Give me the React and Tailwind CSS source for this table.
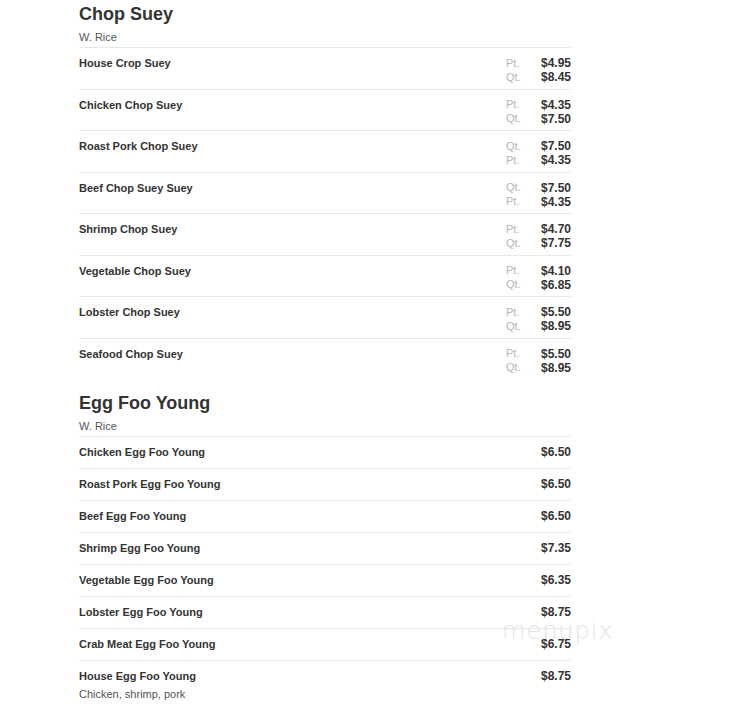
import React from 'react';

const chopSuey = [
  { name: 'House Crop Suey', prices: [['Pt.', '$4.95'], ['Qt.', '$8.45']] },
  { name: 'Chicken Chop Suey', prices: [['Pt.', '$4.35'], ['Qt.', '$7.50']] },
  { name: 'Roast Pork Chop Suey', prices: [['Qt.', '$7.50'], ['Pt.', '$4.35']] },
  { name: 'Beef Chop Suey Suey', prices: [['Qt.', '$7.50'], ['Pt.', '$4.35']] },
  { name: 'Shrimp Chop Suey', prices: [['Pt.', '$4.70'], ['Qt.', '$7.75']] },
  { name: 'Vegetable Chop Suey', prices: [['Pt.', '$4.10'], ['Qt.', '$6.85']] },
  { name: 'Lobster Chop Suey', prices: [['Pt.', '$5.50'], ['Qt.', '$8.95']] },
  { name: 'Seafood Chop Suey', prices: [['Pt.', '$5.50'], ['Qt.', '$8.95']] },
];

const eggFooYoung = [
  { name: 'Chicken Egg Foo Young', price: '$6.50' },
  { name: 'Roast Pork Egg Foo Young', price: '$6.50' },
  { name: 'Beef Egg Foo Young', price: '$6.50' },
  { name: 'Shrimp Egg Foo Young', price: '$7.35' },
  { name: 'Vegetable Egg Foo Young', price: '$6.35' },
  { name: 'Lobster Egg Foo Young', price: '$8.75' },
  { name: 'Crab Meat Egg Foo Young', price: '$6.75' },
  { name: 'House Egg Foo Young', price: '$8.75', desc: 'Chicken, shrimp, pork' },
];

const SectionHeader = ({ title, note }) => (
  <div className="pb-[3px]">
    <h2 className="text-[18px] leading-[22px] font-bold text-[#333]">{title}</h2>
    <p className="mt-[5px] text-[11px] leading-[14px] text-[#555]">{note}</p>
  </div>
);

export default function App() {
  return (
    <div className="relative min-h-[713px] bg-white font-['Liberation_Sans',Arial,sans-serif]">
      <div className="w-[492px] ml-[79px] pt-[3px]">
        {/* Chop Suey */}
        <section className="mb-[13px]">
          <SectionHeader title="Chop Suey" note="W. Rice" />
          {chopSuey.map((item) => (
            <div key={item.name} className="flex border-t border-[#e8e8e8] pt-[8px] pb-[4.5px]">
              <div className="flex-1 text-[11px] leading-[14px] font-bold text-[#333]">{item.name}</div>
              <div className="flex flex-col">
                {item.prices.map(([size, price]) => (
                  <div key={size} className="flex h-[14px] items-center">
                    <span className="w-[35px] text-[11px] text-[#b4b4b4]">{size}</span>
                    <span className="w-[30px] text-right text-[12px] font-bold text-[#333]">{price}</span>
                  </div>
                ))}
              </div>
            </div>
          ))}
        </section>

        {/* Egg Foo Young */}
        <section>
          <SectionHeader title="Egg Foo Young" note="W. Rice" />
          {eggFooYoung.map((item) => (
            <div key={item.name} className="border-t border-[#e8e8e8] pt-[8px] pb-[9px]">
              <div className="flex">
                <div className="flex-1 text-[11px] leading-[14px] font-bold text-[#333]">{item.name}</div>
                <span className="text-[12px] leading-[14px] font-bold text-[#333]">{item.price}</span>
              </div>
              {item.desc && (
                <p className="mt-[4px] text-[11px] leading-[14px] text-[#555]">{item.desc}</p>
              )}
            </div>
          ))}
        </section>
      </div>

      {/* watermark */}
      <div className="absolute left-[502px] top-[619px] text-[24px] leading-none tracking-[1px] text-[#e4e4e4] font-['DejaVu_Sans',sans-serif] font-extralight pointer-events-none">
        menupix
      </div>
    </div>
  );
}
